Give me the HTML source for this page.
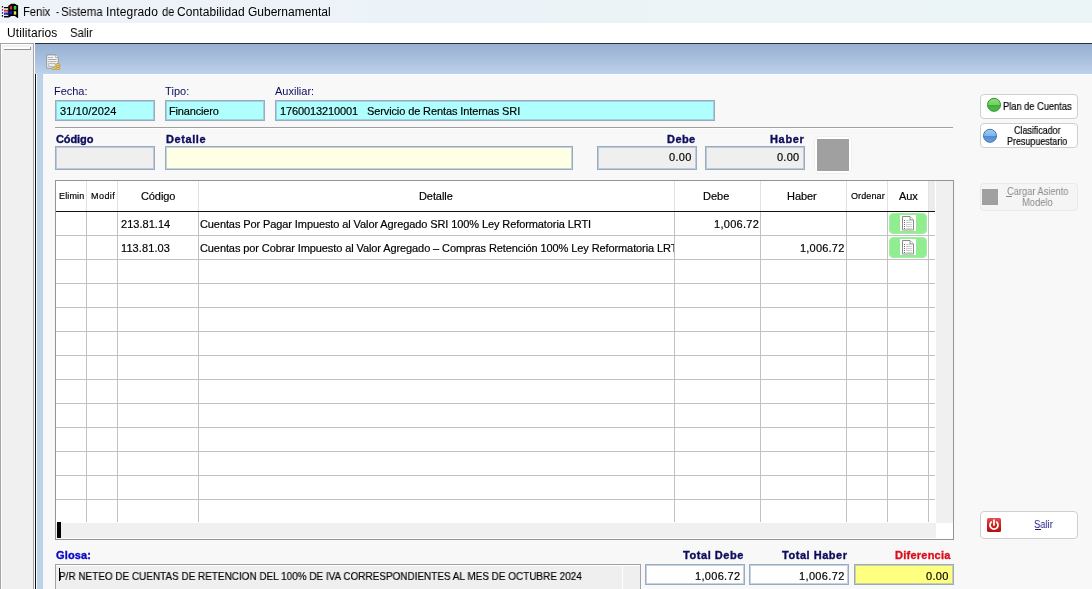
<!DOCTYPE html>
<html>
<head>
<meta charset="utf-8">
<title>Fenix - Sistema Integrado de Contabilidad Gubernamental</title>
<style>
html,body{margin:0;padding:0;}
body{width:1092px;height:589px;overflow:hidden;position:relative;background:#f8f8f8;font-family:"Liberation Sans",sans-serif;font-size:11px;color:#000;}
.a{position:absolute;white-space:pre;line-height:1;will-change:transform;}
.b{position:absolute;box-sizing:border-box;}
#titlebar{left:0;top:0;width:1092px;height:23px;background:linear-gradient(90deg,#eef2f9 0%,#ecf3f8 40%,#ebf4f6 100%);}
#menubar{left:0;top:23px;width:1092px;height:20px;background:#fff;}
#topline{left:35px;top:43px;width:1057px;height:1px;background:#2c323c;}
#toolbar{left:35px;top:44px;width:1057px;height:30px;background:linear-gradient(180deg,#98b1d2 0%,#a8bfdd 50%,#bdd2eb 100%);}
#leftstrip{left:0;top:43px;width:34px;height:546px;background:#f0f0f0;border-right:1px solid #a4a4a4;border-left:1px solid #a4a4a4;border-top:1px solid #a4a4a4;box-shadow:inset 1px 1px 0 #fff;}
#leftgap{left:34px;top:43px;width:1px;height:546px;background:#fdfdfd;}
#grip{left:4px;top:47px;width:27px;height:3px;background:#fff;border-bottom:1px solid #929292;border-right:1px solid #929292;}
#vdark{left:35px;top:74px;width:1px;height:515px;background:#0c0c0c;border-right:1px solid #fbfcfd;box-sizing:content-box;}
#bluestrip{left:37px;top:74px;width:6px;height:515px;background:#bdd1e9;border-right:1px solid #f0f6fb;box-sizing:content-box;}
#panel{left:44px;top:74px;width:1048px;height:515px;background:#f8f8f8;border-top:1px solid #fcfdfe;}
.fld{border:1px solid #9babbb;background:#afffff;box-shadow:inset 0 0 0 1px rgba(140,165,200,0.5);}
.sep{left:55px;top:127px;width:898px;height:2px;background:#fff;border-top:1px solid #a0a0a0;}
#tframe{left:55px;top:180px;width:899px;height:360px;border:1px solid #949494;background:#fff;}
.vl{position:absolute;width:1px;background:#c2c2c2;top:212px;height:310px;}
.hv{position:absolute;width:1px;background:#e3e3e3;top:181px;height:30px;}
#hlines{left:56px;top:212px;width:879px;height:311px;background:repeating-linear-gradient(to bottom,transparent 0,transparent 23px,#c2c2c2 23px,#c2c2c2 24px);}
#hdrline{left:56px;top:211px;width:879px;height:1px;background:#111;}
#hdrfill{left:929px;top:181px;width:6px;height:30px;background:#ececec;}
#vscroll{left:936px;top:181px;width:17px;height:342px;background:#f0f0f0;}
#hscroll{left:56px;top:523px;width:880px;height:15px;background:#f0f0f0;}
#thumb{left:57px;top:522px;width:4px;height:16px;background:#000;}
.gbtn{background:#90ee90;border-radius:4px;border:1px solid #a6eea6;}
.btn{border:1px solid #cfcfcf;border-radius:4px;background:#fff;}
</style>
</head>
<body>
<div class="b" id="titlebar"></div>
<div class="b" id="menubar"></div>
<div class="b" id="leftstrip"></div>
<div class="b" id="leftgap"></div>
<div class="b" id="grip"></div>
<div class="b" id="topline"></div>
<div class="b" id="toolbar"></div>
<div class="b" id="vdark"></div>
<div class="b" id="bluestrip"></div>
<div class="b" id="panel"></div>

<!-- app icon -->
<svg class="b" style="left:0;top:0" width="22" height="22" viewBox="0 0 22 22">
<g fill="#000"><rect x="1.9" y="6.1" width="1.2" height="1.4"/><rect x="1.9" y="15" width="1.2" height="1.6"/></g>
<rect x="1.9" y="9" width="1.2" height="1.7" fill="#9c3838"/><rect x="1.9" y="12" width="1.2" height="1.7" fill="#2020a0"/>
<path d="M4 6.9 H8.4 V8.2 H4 Z M4 15.9 H8.4 V17.6 H4 Z" fill="#000"/>
<path d="M4.1 9.8 H8.3 V11.7 H4.1 Z" fill="#d41818"/>
<path d="M4.1 12.5 H8.3 V15.1 H4.1 Z" fill="#1414b8"/>
<path d="M5.3 10.6 v1.1 M6.8 10.6 v1.1 M5.3 13.6 v1.5 M6.8 13.6 v1.5" stroke="#eef2f9" stroke-width="0.45"/>
<path d="M8.2 5.8 C9.4 5.4 10 4 11.4 3.7 H14.6 C15.6 4 16.4 5 18.1 5.2 V18 C16.6 17.8 16 16.4 14.8 16 H11.6 C10.4 16.3 9.8 17.5 8.2 17.6 Z" fill="#000"/>
<rect x="9.8" y="6.2" width="2.3" height="3.3" fill="#d82c2c"/>
<rect x="13.8" y="6" width="2.5" height="3.7" fill="#34c844"/>
<rect x="9.6" y="11" width="2.5" height="3.4" fill="#1616cc"/>
<rect x="13.8" y="11.2" width="2.4" height="3.5" fill="#e8e04c"/>
</svg>

<!-- toolbar icon -->
<svg class="b" style="left:40px;top:48px" width="28" height="28" viewBox="0 0 28 28">
<path d="M6.7 6.9 H15.6 L18.2 9.5 V20.2 H6.7 Z" fill="#f5f5f1" stroke="#8a97a3" stroke-width="1"/>
<path d="M15.6 6.9 V9.5 H18.2" fill="#fff" stroke="#9aa5ae" stroke-width="0.8"/>
<rect x="8.3" y="9" width="1" height="1" fill="#777"/><rect x="9.8" y="9" width="3.4" height="1" fill="#b8b8b8"/>
<rect x="8.3" y="11" width="8.3" height="1" fill="#a8a8a8"/>
<rect x="8.3" y="13.1" width="1" height="1" fill="#777"/><rect x="9.8" y="13.1" width="6.8" height="1" fill="#b0b0b0"/>
<rect x="8.8" y="15.6" width="6.4" height="3" fill="#ececf2" stroke="#a8a8a8" stroke-width="0.8"/>
<g fill="#fbdf86" stroke="#b08a1c" stroke-width="0.7">
<rect x="15.8" y="15.7" width="4" height="1.7" rx="0.8"/>
<rect x="15.8" y="17.7" width="4" height="1.7" rx="0.8"/>
<rect x="15.8" y="19.7" width="4" height="1.7" rx="0.8"/>
<rect x="11.8" y="19.7" width="3.6" height="1.7" rx="0.8"/>
</g>
</svg>

<!-- fields -->
<div class="b fld" style="left:55px;top:100px;width:100px;height:21px"></div>
<div class="b fld" style="left:165px;top:100px;width:100px;height:21px"></div>
<div class="b fld" style="left:275px;top:100px;width:440px;height:21px"></div>
<div class="b sep"></div>
<div class="b fld" style="left:55px;top:146px;width:100px;height:24px;background:#efefef"></div>
<div class="b fld" style="left:165px;top:146px;width:408px;height:24px;background:#ffffe6"></div>
<div class="b fld" style="left:597px;top:146px;width:100px;height:24px;background:#efefef"></div>
<div class="b fld" style="left:705px;top:146px;width:100px;height:24px;background:#efefef"></div>
<div class="b" style="left:814px;top:136px;width:38px;height:38px;background:#fff;border-radius:5px;border:1px solid #f0f0f0"></div>
<div class="b" style="left:817px;top:139px;width:32px;height:32px;background:#a0a0a0"></div>

<!-- table -->
<div class="b" id="tframe"></div>
<div class="b" id="hdrfill"></div>
<div class="hv" style="left:86px"></div><div class="hv" style="left:117px"></div><div class="hv" style="left:198px"></div><div class="hv" style="left:674px"></div><div class="hv" style="left:760px"></div><div class="hv" style="left:846px"></div><div class="hv" style="left:887px"></div><div class="hv" style="left:928px"></div>
<div class="b" id="hlines"></div>
<div class="vl" style="left:86px"></div><div class="vl" style="left:117px"></div><div class="vl" style="left:198px"></div><div class="vl" style="left:674px"></div><div class="vl" style="left:760px"></div><div class="vl" style="left:846px"></div><div class="vl" style="left:887px"></div><div class="vl" style="left:928px"></div>
<div class="b" id="hdrline"></div>
<div class="b" id="vscroll"></div>
<div class="b" id="hscroll"></div>
<div class="b" id="thumb"></div>

<!-- aux green buttons -->
<div class="b gbtn" style="left:889px;top:213px;width:38px;height:21px"></div>
<div class="b gbtn" style="left:889px;top:237px;width:38px;height:21px"></div>
<svg class="b" style="left:900px;top:215px" width="16" height="16" viewBox="0 0 16 16"><rect x="0" y="0" width="16" height="16" fill="#fff"/>
<path d="M2.5 1.5 H10 L13.5 5 V15 H2.5 Z" fill="#fdfdfd" stroke="#8c8c8c" stroke-width="1"/>
<path d="M10 1.5 V5 H13.5" fill="#f0f0f0" stroke="#8c8c8c" stroke-width="0.9"/>
<g fill="#6a6a6a"><rect x="4" y="5" width="1" height="1"/><rect x="4" y="7" width="1" height="1"/><rect x="4" y="9" width="1" height="1"/><rect x="4" y="11" width="1" height="1"/><rect x="4" y="13" width="1" height="1"/></g>
<g fill="#cfcfcf"><rect x="6" y="5" width="4" height="1"/><rect x="6" y="7" width="6" height="1"/><rect x="6" y="9" width="6" height="1"/><rect x="6" y="11" width="6" height="1"/><rect x="6" y="13" width="6" height="1"/></g></svg>
<svg class="b" style="left:900px;top:239px" width="16" height="16" viewBox="0 0 16 16"><rect x="0" y="0" width="16" height="16" fill="#fff"/>
<path d="M2.5 1.5 H10 L13.5 5 V15 H2.5 Z" fill="#fdfdfd" stroke="#8c8c8c" stroke-width="1"/>
<path d="M10 1.5 V5 H13.5" fill="#f0f0f0" stroke="#8c8c8c" stroke-width="0.9"/>
<g fill="#6a6a6a"><rect x="4" y="5" width="1" height="1"/><rect x="4" y="7" width="1" height="1"/><rect x="4" y="9" width="1" height="1"/><rect x="4" y="11" width="1" height="1"/><rect x="4" y="13" width="1" height="1"/></g>
<g fill="#cfcfcf"><rect x="6" y="5" width="4" height="1"/><rect x="6" y="7" width="6" height="1"/><rect x="6" y="9" width="6" height="1"/><rect x="6" y="11" width="6" height="1"/><rect x="6" y="13" width="6" height="1"/></g></svg>


<!-- glosa + totals -->
<div class="b" style="left:55px;top:564px;width:586px;height:30px;background:#efefef;border:1px solid #a2a2a2"></div>
<div class="b" style="left:56px;top:565px;width:584px;height:1px;background:#fff"></div>
<div class="b" style="left:622px;top:565px;width:1px;height:24px;background:#fff"></div>
<div class="b" style="left:59px;top:568px;width:1px;height:13px;background:#000"></div>
<div class="b fld" style="left:645px;top:564px;width:100px;height:21px;background:#fff"></div>
<div class="b fld" style="left:749px;top:564px;width:100px;height:21px;background:#fff"></div>
<div class="b fld" style="left:854px;top:564px;width:100px;height:21px;background:#ffff80"></div>

<!-- right buttons -->
<div class="b btn" style="left:980px;top:94px;width:98px;height:25px"></div>
<div class="b btn" style="left:980px;top:123px;width:98px;height:25px"></div>
<div class="b btn" style="left:980px;top:183px;width:98px;height:28px;background:#f5f5f5;border-color:#e9e9e9"></div>
<div class="b btn" style="left:980px;top:511px;width:98px;height:28px"></div>
<div class="b" style="left:982px;top:189px;width:16px;height:16px;background:#a0a0a0"></div>
<svg class="b" style="left:986px;top:97px" width="16" height="16" viewBox="0 0 16 16">
<defs><linearGradient id="gg" x1="0" y1="0" x2="0" y2="1"><stop offset="0" stop-color="#8fe07c"/><stop offset="0.5" stop-color="#6fd25e"/><stop offset="0.52" stop-color="#3fae38"/><stop offset="1" stop-color="#4fc046"/></linearGradient></defs>
<circle cx="8" cy="7.8" r="6.5" fill="url(#gg)" stroke="#2f8f2c" stroke-width="1"/></svg>
<svg class="b" style="left:982px;top:128px" width="16" height="16" viewBox="0 0 16 16">
<defs><linearGradient id="bg" x1="0" y1="0" x2="0" y2="1"><stop offset="0" stop-color="#a6cdf4"/><stop offset="0.5" stop-color="#7db2ea"/><stop offset="0.52" stop-color="#4c8bd0"/><stop offset="1" stop-color="#6aa4de"/></linearGradient></defs>
<circle cx="8" cy="7.8" r="6.5" fill="url(#bg)" stroke="#3e74b4" stroke-width="1"/></svg>
<!-- salir icon -->
<svg class="b" style="left:987px;top:518px" width="14" height="14" viewBox="0 0 14 14">
<defs><linearGradient id="rg" x1="0" y1="0" x2="0" y2="1"><stop offset="0" stop-color="#e85050"/><stop offset="0.5" stop-color="#d02020"/><stop offset="1" stop-color="#b01010"/></linearGradient></defs>
<rect x="0" y="0" width="14" height="14" rx="1.5" fill="url(#rg)"/>
<path d="M4.3 4.2 A4 4 0 1 0 9.7 4.2" fill="none" stroke="#fff" stroke-width="1.8" stroke-linecap="round"/>
<path d="M7 2.2 V7" stroke="#fff" stroke-width="1.8" stroke-linecap="round"/>
</svg>
<div class="b" style="left:1035px;top:529px;width:6px;height:1px;background:#1c1c86"></div>
<div class="b" style="left:1006px;top:196px;width:6px;height:1px;background:#8a8a8a"></div>

<div class="a" style="left:22.77px;top:6px;font-size:12px;font-weight:normal;color:#000;letter-spacing:0.000px;transform:scaleX(0.9321);transform-origin:0 0;">Fenix</div>
<div class="a" style="left:55.60px;top:6px;font-size:12px;font-weight:normal;color:#000;letter-spacing:0.000px;transform:scaleX(0.7750);transform-origin:0 0;">-</div>
<div class="a" style="left:61.04px;top:6px;font-size:12px;font-weight:normal;color:#000;letter-spacing:0.000px;transform:scaleX(0.9595);transform-origin:0 0;">Sistema</div>
<div class="a" style="left:105.80px;top:6px;font-size:12px;font-weight:normal;color:#000;letter-spacing:0.138px;">Integrado</div>
<div class="a" style="left:161.80px;top:6px;font-size:12px;font-weight:normal;color:#000;letter-spacing:0.000px;transform:scaleX(0.9231);transform-origin:0 0;">de</div>
<div class="a" style="left:177.20px;top:6px;font-size:12px;font-weight:normal;color:#000;letter-spacing:0.091px;">Contabilidad</div>
<div class="a" style="left:248.00px;top:6px;font-size:12px;font-weight:normal;color:#000;letter-spacing:-0.008px;">Gubernamental</div>
<div class="a" style="left:6.90px;top:27px;font-size:12px;font-weight:normal;color:#000;letter-spacing:0.100px;">Utilitarios</div>
<div class="a" style="left:70.36px;top:27px;font-size:12px;font-weight:normal;color:#000;letter-spacing:0.000px;transform:scaleX(0.9435);transform-origin:0 0;">Salir</div>
<div class="a" style="left:54.00px;top:86px;font-size:11px;font-weight:normal;color:#0c0c5e;letter-spacing:-0.020px;">Fecha:</div>
<div class="a" style="left:165.20px;top:86px;font-size:11px;font-weight:normal;color:#0c0c5e;letter-spacing:0.075px;">Tipo:</div>
<div class="a" style="left:275.30px;top:86px;font-size:11px;font-weight:normal;color:#0c0c5e;letter-spacing:0.000px;">Auxiliar:</div>
<div class="a" style="left:59.60px;top:106px;font-size:11px;font-weight:normal;color:#000;letter-spacing:0.144px;-webkit-text-stroke:0.18px #000;">31/10/2024</div>
<div class="a" style="left:168.80px;top:106px;font-size:11px;font-weight:normal;color:#000;letter-spacing:-0.156px;-webkit-text-stroke:0.18px #000;">Financiero</div>
<div class="a" style="left:280.30px;top:106px;font-size:11px;font-weight:normal;color:#000;letter-spacing:-0.109px;-webkit-text-stroke:0.18px #000;">1760013210001   Servicio de Rentas Internas SRI</div>
<div class="a" style="left:55.50px;top:134px;font-size:11px;font-weight:bold;color:#0c0c5e;letter-spacing:-0.100px;-webkit-text-stroke:0.35px #0c0c5e;">Código</div>
<div class="a" style="left:165.50px;top:134px;font-size:11px;font-weight:bold;color:#0c0c5e;letter-spacing:0.583px;-webkit-text-stroke:0.35px #0c0c5e;">Detalle</div>
<div class="a" style="left:666.70px;top:134px;font-size:11px;font-weight:bold;color:#0c0c5e;letter-spacing:0.433px;-webkit-text-stroke:0.35px #0c0c5e;">Debe</div>
<div class="a" style="left:769.50px;top:134px;font-size:11px;font-weight:bold;color:#0c0c5e;letter-spacing:0.675px;-webkit-text-stroke:0.35px #0c0c5e;">Haber</div>
<div class="a" style="left:668.70px;top:152px;font-size:11px;font-weight:normal;color:#000;letter-spacing:0.333px;-webkit-text-stroke:0.18px #000;">0.00</div>
<div class="a" style="left:776.70px;top:152px;font-size:11px;font-weight:normal;color:#000;letter-spacing:0.233px;-webkit-text-stroke:0.18px #000;">0.00</div>
<div class="a" style="left:59.00px;top:192px;font-size:9px;font-weight:normal;color:#000;letter-spacing:0.140px;-webkit-text-stroke:0.18px #000;">Elimin</div>
<div class="a" style="left:90.70px;top:192px;font-size:9px;font-weight:normal;color:#000;letter-spacing:0.450px;-webkit-text-stroke:0.18px #000;">Modif</div>
<div class="a" style="left:140.70px;top:191px;font-size:11px;font-weight:normal;color:#000;letter-spacing:-0.100px;-webkit-text-stroke:0.18px #000;">Código</div>
<div class="a" style="left:418.50px;top:191px;font-size:11px;font-weight:normal;color:#000;letter-spacing:-0.083px;-webkit-text-stroke:0.18px #000;">Detalle</div>
<div class="a" style="left:703.20px;top:191px;font-size:11px;font-weight:normal;color:#000;letter-spacing:0.000px;-webkit-text-stroke:0.18px #000;">Debe</div>
<div class="a" style="left:787.20px;top:191px;font-size:11px;font-weight:normal;color:#000;letter-spacing:-0.050px;-webkit-text-stroke:0.18px #000;">Haber</div>
<div class="a" style="left:850.50px;top:192px;font-size:9px;font-weight:normal;color:#000;letter-spacing:0.117px;-webkit-text-stroke:0.18px #000;">Ordenar</div>
<div class="a" style="left:898.70px;top:191px;font-size:11px;font-weight:normal;color:#000;letter-spacing:-0.100px;-webkit-text-stroke:0.18px #000;">Aux</div>
<div class="a" style="left:120.70px;top:219px;font-size:11px;font-weight:normal;color:#000;letter-spacing:0.037px;-webkit-text-stroke:0.18px #000;">213.81.14</div>
<div class="a" style="left:199.70px;top:219px;font-size:11px;font-weight:normal;color:#000;letter-spacing:-0.097px;-webkit-text-stroke:0.18px #000;">Cuentas Por Pagar Impuesto al Valor Agregado SRI 100% Ley Reformatoria LRTI</div>
<div class="a" style="left:714.00px;top:219px;font-size:11px;font-weight:normal;color:#000;letter-spacing:0.286px;-webkit-text-stroke:0.18px #000;">1,006.72</div>
<div class="a" style="left:120.70px;top:243px;font-size:11px;font-weight:normal;color:#000;letter-spacing:0.100px;-webkit-text-stroke:0.18px #000;">113.81.03</div>
<div class="a" style="left:800.20px;top:243px;font-size:11px;font-weight:normal;color:#000;letter-spacing:0.214px;-webkit-text-stroke:0.18px #000;">1,006.72</div>
<div class="a" style="left:55.50px;top:550px;font-size:11px;font-weight:bold;color:#0808c8;letter-spacing:0.140px;-webkit-text-stroke:0.35px #0808c8;">Glosa:</div>
<div class="a" style="left:59.20px;top:571px;font-size:11px;font-weight:normal;color:#000;letter-spacing:0.000px;-webkit-text-stroke:0.18px #000;transform:scaleX(0.9040);transform-origin:0 0;">P/R NETEO DE CUENTAS DE RETENCION DEL 100% DE IVA CORRESPONDIENTES AL MES DE OCTUBRE 2024</div>
<div class="a" style="left:683.00px;top:550px;font-size:11px;font-weight:bold;color:#0c0c5e;letter-spacing:0.556px;-webkit-text-stroke:0.35px #0c0c5e;">Total Debe</div>
<div class="a" style="left:781.70px;top:550px;font-size:11px;font-weight:bold;color:#0c0c5e;letter-spacing:0.530px;-webkit-text-stroke:0.35px #0c0c5e;">Total Haber</div>
<div class="a" style="left:895.00px;top:550px;font-size:11px;font-weight:bold;color:#d8101c;letter-spacing:0.244px;-webkit-text-stroke:0.35px #d8101c;">Diferencia</div>
<div class="a" style="left:694.50px;top:571px;font-size:11px;font-weight:normal;color:#000;letter-spacing:0.314px;-webkit-text-stroke:0.18px #000;">1,006.72</div>
<div class="a" style="left:798.50px;top:571px;font-size:11px;font-weight:normal;color:#000;letter-spacing:0.357px;-webkit-text-stroke:0.18px #000;">1,006.72</div>
<div class="a" style="left:925.50px;top:571px;font-size:11px;font-weight:normal;color:#000;letter-spacing:0.333px;-webkit-text-stroke:0.18px #000;">0.00</div>
<div class="a" style="left:1002.67px;top:102px;font-size:10px;font-weight:normal;color:#000;letter-spacing:0.000px;-webkit-text-stroke:0.18px #000;transform:scaleX(0.9274);transform-origin:0 0;">Plan de Cuentas</div>
<div class="a" style="left:1014.40px;top:126px;font-size:10px;font-weight:normal;color:#000;letter-spacing:0.000px;-webkit-text-stroke:0.18px #000;transform:scaleX(0.8904);transform-origin:0 0;">Clasificador</div>
<div class="a" style="left:1006.70px;top:137px;font-size:10px;font-weight:normal;color:#000;letter-spacing:0.000px;-webkit-text-stroke:0.18px #000;transform:scaleX(0.8955);transform-origin:0 0;">Presupuestario</div>
<div class="a" style="left:1006.50px;top:187px;font-size:10px;font-weight:normal;color:#8a8a8a;letter-spacing:0.000px;transform:scaleX(0.9288);transform-origin:0 0;">Cargar Asiento</div>
<div class="a" style="left:1022.06px;top:198px;font-size:10px;font-weight:normal;color:#8a8a8a;letter-spacing:0.000px;transform:scaleX(0.9355);transform-origin:0 0;">Modelo</div>
<div class="a" style="left:1034.46px;top:520px;font-size:10px;font-weight:normal;color:#1c1c86;letter-spacing:0.000px;transform:scaleX(0.9368);transform-origin:0 0;">Salir</div>
<div class="a" style="left:199.70px;top:243px;width:473.90px;overflow:hidden;font-size:11px;letter-spacing:-0.099px;-webkit-text-stroke:0.18px #000;">Cuentas por Cobrar Impuesto al Valor Agregado – Compras Retención 100% Ley Reformatoria LRTI</div>
</body>
</html>
